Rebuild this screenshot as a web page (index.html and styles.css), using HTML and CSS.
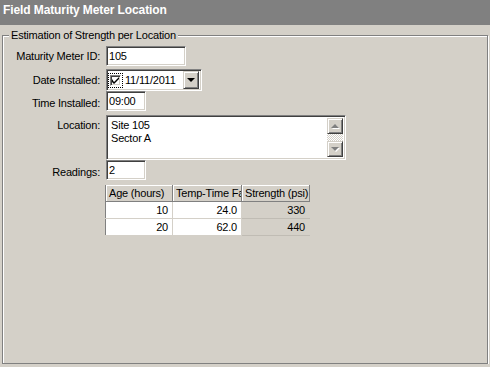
FILE: index.html
```html
<!doctype html>
<html>
<head>
<meta charset="UTF-8">
<title>Field Maturity Meter Location</title>
<link rel="stylesheet" href="styles.css">
</head>
<body>
	<div class="titlebar">Field Maturity Meter Location</div>
	<fieldset class="group">
		<legend>Estimation of Strength per Location</legend>
		<div class="form">
			<label class="row-id">Maturity Meter ID:</label>
			<input type="text" class="sunken field-id" value="105">

			<label class="row-date">Date Installed:</label>
			<div class="sunken datepick">
				<span class="focus"><span class="checkbox"><svg width="7" height="7" viewBox="0 0 7 7"><path d="M0 2v3l2 2l5-5v-2l-5 5z" fill="#000"/></svg></span></span>
				<span class="datetext">11/11/2011</span>
				<span class="raised dropbtn"><span class="arrow-down"></span></span>
			</div>

			<label class="row-time">Time Installed:</label>
			<input type="text" class="sunken field-time" value="09:00">

			<label class="row-loc">Location:</label>
			<div class="sunken memo">
				<div class="memo-text">Site 105<br>Sector A</div>
				<div class="scrollbar">
					<span class="raised sbtn"><span class="arrow-up"></span></span>
					<span class="track"></span>
					<span class="raised sbtn"><span class="arrow-down gray"></span></span>
				</div>
			</div>

			<label class="row-read">Readings:</label>
			<input type="text" class="sunken field-read" value="2">
		</div>

		<table class="grid">
			<colgroup><col class="c1"><col class="c2"><col class="c3"></colgroup>
			<tr><th>Age (hours)</th><th>Temp-Time Factor</th><th>Strength (psi)</th></tr>
			<tr><td>10</td><td>24.0</td><td class="ro">330</td></tr>
			<tr><td>20</td><td>62.0</td><td class="ro">440</td></tr>
		</table>
	</fieldset>
</body>
</html>
```

FILE: styles.css
```css
* {
	font-family: "Liberation Sans", Arial, sans-serif;
	box-sizing: border-box;
}
body {
	margin: 0;
	background-color: #d4d0c8;
	font-size: 11px;
	letter-spacing: -0.2px;
	color: #000000;
}
.titlebar {
	height: 25px;
	padding: 2px 3px 0;
	line-height: 16px;
	background-color: #808080;
	color: #ffffff;
	font-size: 12px;
	font-weight: bold;
	letter-spacing: -0.1px;
}
.group {
	margin: 4px 0 0 2px;
	padding: 4px 0 0 0;
	width: 486px;
	height: 335px;
	border: 1px solid #808080;
	box-shadow: inset 1px 1px #ffffff, 1px 1px #ffffff;
}
.group legend {
	margin-left: 6px;
	padding: 0 2px;
	line-height: 13px;
	background-color: #d4d0c8;
}
.form {
	display: grid;
	grid-template-columns: 97px auto;
	column-gap: 6px;
	align-items: center;
	justify-items: start;
}
.form label {
	justify-self: end;
}
.sunken {
	border: 1px solid;
	border-color: #808080 #ffffff #ffffff #808080;
	box-shadow: inset 1px 1px #404040, inset -1px -1px #d4d0c8;
	background-color: #ffffff;
}
.raised {
	display: block;
	background-color: #d4d0c8;
	border: 1px solid;
	border-color: #d4d0c8 #404040 #404040 #d4d0c8;
	box-shadow: inset 1px 1px #ffffff, inset -1px -1px #808080;
}
input[type=text] {
	margin: 0;
	padding: 0 2px;
	font-size: 11px;
	letter-spacing: -0.2px;
	outline: none;
}
.field-id {
	width: 80px;
	height: 20px;
}
.datepick {
	margin-top: 3px;
	width: 96px;
	height: 22px;
	display: flex;
	align-items: center;
	padding: 0 2px 0 1px;
}
.focus {
	display: block;
	border: 1px dotted #000000;
	padding: 1px;
}
.checkbox {
	display: flex;
	align-items: center;
	justify-content: center;
	width: 11px;
	height: 11px;
	border: 1px solid;
	border-color: #808080 #ffffff #ffffff #808080;
	box-shadow: inset 1px 1px #404040, inset -1px -1px #d4d0c8;
	background-color: #ffffff;
}
.datetext {
	margin-left: 2px;
	flex: 1;
}
.dropbtn {
	width: 16px;
	height: 18px;
	display: flex;
	align-items: center;
	justify-content: center;
}
.arrow-down {
	width: 0;
	height: 0;
	border-left: 4px solid transparent;
	border-right: 4px solid transparent;
	border-top: 4px solid #000000;
}
.arrow-up {
	width: 0;
	height: 0;
	border-left: 4px solid transparent;
	border-right: 4px solid transparent;
	border-bottom: 4px solid #808080;
	filter: drop-shadow(1px 1px 0 #ffffff);
}
.arrow-down.gray {
	border-top-color: #808080;
	filter: drop-shadow(1px 1px 0 #ffffff);
}
.field-time {
	margin-top: 4px;
	width: 40px;
	height: 20px;
}
.row-time {
	margin-top: 4px;
}
.row-date {
	margin-top: 3px;
}
.row-loc {
	align-self: start;
	margin-top: 8px;
}
.memo {
	margin-top: 4px;
	width: 240px;
	height: 45px;
	display: flex;
	padding: 2px;
}
.memo-text {
	flex: 1;
	padding: 1px 2px;
	line-height: 13px;
}
.scrollbar {
	width: 16px;
	display: flex;
	flex-direction: column;
}
.sbtn {
	width: 16px;
	height: 16px;
	display: flex;
	align-items: center;
	justify-content: center;
}
.track {
	flex: 1;
	background-color: #ffffff;
	background-image: repeating-conic-gradient(#d4d0c8 0 25%, #ffffff 0 50%);
	background-size: 2px 2px;
}
.field-read {
	margin-top: 4px;
	width: 40px;
	height: 20px;
}
.row-read {
	margin-top: 4px;
}
.grid {
	margin: 5px 0 0 102px;
	border-collapse: collapse;
	table-layout: fixed;
	width: 204px;
	border: 1px solid #808080;
	border-top: none;
}
.grid .c1 {
	width: 67px;
}
.grid .c2 {
	width: 69px;
}
.grid .c3 {
	width: 68px;
}
.grid th {
	height: 16px;
	padding: 0 3px;
	font-weight: normal;
	text-align: left;
	white-space: nowrap;
	overflow: hidden;
	background-color: #d4d0c8;
	border-right: 1px solid #808080;
	border-bottom: 1px solid #808080;
	box-shadow: inset 1px 1px #ffffff;
}
.grid td {
	height: 17px;
	padding: 0 4px;
	text-align: right;
	background-color: #ffffff;
	border-right: 1px solid #d4d0c8;
	border-bottom: 1px solid #d4d0c8;
}
.grid td.ro {
	background-color: #d4d0c8;
	border-bottom-color: #c0bcb4;
}
```
